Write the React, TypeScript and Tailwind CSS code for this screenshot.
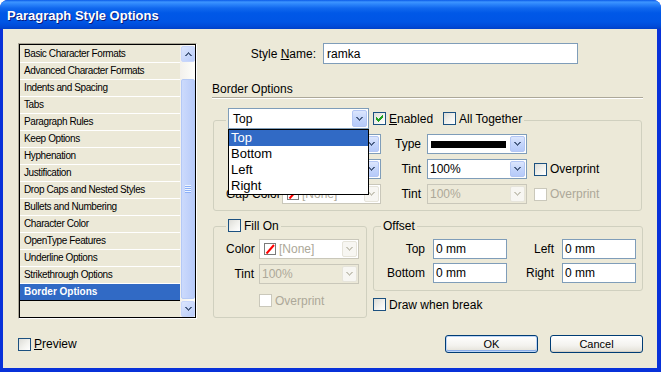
import React from "react";

const CHEV = "M0 0h2v1h-2z M5 0h2v1h-2z M1 1h2v1h-2z M4 1h2v1h-2z M2 2h3v1h-3z M3 3h1v1h-1z";
const CHEV_UP = "M3 0h1v1h-1z M2 1h3v1h-3z M1 2h2v1h-2z M4 2h2v1h-2z M0 3h2v1h-2z M5 3h2v1h-2z";
const TICK =
  "M6 0h1v1h-1z M5 1h2v1h-2z M0 2h1v1h-1z M4 2h3v1h-3z M0 3h2v1h-2z M3 3h3v1h-3z M0 4h5v1h-5z M1 5h3v1h-3z M2 6h1v1h-1z";

function Chevron({ color, up = false }: { color: string; up?: boolean }) {
  return (
    <svg width="7" height="4" viewBox="0 0 7 4" shapeRendering="crispEdges">
      <path d={up ? CHEV_UP : CHEV} fill={color} />
    </svg>
  );
}

function Box({ checked = false, disabled = false }: { checked?: boolean; disabled?: boolean }) {
  return (
    <span
      className={
        disabled
          ? "flex h-[13px] w-[13px] flex-none border border-[#CAC8BB] bg-white"
          : "flex h-[13px] w-[13px] flex-none items-start border border-[#1C5180] bg-[linear-gradient(135deg,#DCDCD7_0%,#F2F2EE_55%,#FFFFFF_100%)]"
      }
    >
      {checked ? (
        <svg className="ml-[2px] mt-[2px]" width="7" height="7" viewBox="0 0 7 7" shapeRendering="crispEdges">
          <path d={TICK} fill="#21A121" />
        </svg>
      ) : null}
    </span>
  );
}

function Arrow({ disabled = false }: { disabled?: boolean }) {
  return (
    <span
      className={
        disabled
          ? "my-[1px] mr-[1px] flex w-[15px] flex-none items-center justify-center rounded-[2px] border border-[#E6E4DA] bg-[#F7F6F2]"
          : "my-[1px] mr-[1px] flex w-[15px] flex-none items-center justify-center rounded-[2px] border border-[#B3C6F4] bg-[linear-gradient(180deg,#DCE6FD_0%,#C4D5FB_50%,#B6CAF9_100%)]"
      }
    >
      <Chevron color={disabled ? "#C9C7BA" : "#4D6185"} />
    </span>
  );
}

function NoneSwatch() {
  return (
    <svg width="12" height="12" viewBox="0 0 12 12" className="flex-none">
      <rect x="0.5" y="0.5" width="11" height="11" fill="#fff" stroke="#7A7A7A" />
      <path d="M2.5 10.5 L10 2" stroke="#FF0000" strokeWidth="2" />
    </svg>
  );
}

const listItems = [
  "Basic Character Formats",
  "Advanced Character Formats",
  "Indents and Spacing",
  "Tabs",
  "Paragraph Rules",
  "Keep Options",
  "Hyphenation",
  "Justification",
  "Drop Caps and Nested Styles",
  "Bullets and Numbering",
  "Character Color",
  "OpenType Features",
  "Underline Options",
  "Strikethrough Options",
];

export default function App() {
  return (
    <div className="flex h-[372px] w-[661px] flex-col overflow-hidden rounded-t-[8px] bg-[#0831D9] font-['Liberation_Sans',Arial,sans-serif] text-black">
      {/* Title bar */}
      <div className="flex h-[29px] flex-none items-center bg-[linear-gradient(180deg,#0A5AE8_0%,#3D95FF_7%,#2D86FB_14%,#1168EE_28%,#0058E7_45%,#0055E5_75%,#004BD9_90%,#0040C8_100%)] pl-[7px] pt-[3px] text-[13px] font-bold text-white [text-shadow:1px_1px_0_#0A1A7A]">
        Paragraph Style Options
      </div>

      {/* Body */}
      <div className="mb-[4px] ml-[3px] mr-[4px] flex min-h-0 flex-1 flex-col bg-[#ECE9D8] pl-[15px] pr-[14px] pt-[14px]">
        <div className="flex h-[276px] flex-none">
          {/* Category list */}
          <div className="flex h-[276px] w-[179px] flex-none border border-b-white border-l-[#ACA899] border-r-white border-t-[#ACA899]">
            <div className="flex flex-1 border border-black">
              <div className="flex-1 bg-[#ECE9D8] pt-[1px] text-[10px] tracking-[-0.4px]">
                {listItems.map((t) => (
                  <div key={t} className="flex h-[17px] items-center border-b border-white pl-[4px] leading-[16px]">
                    {t}
                  </div>
                ))}
                <div className="flex h-[17px] items-center border-b border-black bg-[#316AC5] pl-[4px] font-bold leading-[16px] tracking-normal text-white">
                  Border Options
                </div>
              </div>
              <div className="flex w-[15px] flex-none flex-col bg-[linear-gradient(90deg,#F3F1EC,#FEFEFB)] pl-[1px]">
                <div className="mt-[1px] flex h-[16px] flex-none items-center justify-center rounded-[2px] border border-[#C8D6FB] bg-[linear-gradient(135deg,#DCE6FD,#B9CCFA)]">
                  <Chevron color="#4D6185" up />
                </div>
                <div className="h-[17px] flex-none" />
                <div className="flex h-[220px] flex-none flex-col items-center justify-center rounded-[2px] border border-[#B4C9F6] bg-[linear-gradient(90deg,#CCDAFC,#B8CBF9)]">
                  <div className="h-px w-[6px] bg-[#EEF4FE]" />
                  <div className="h-px w-[6px] bg-[#8CB0F8]" />
                  <div className="h-px w-[6px] bg-[#EEF4FE]" />
                  <div className="h-px w-[6px] bg-[#8CB0F8]" />
                  <div className="h-px w-[6px] bg-[#EEF4FE]" />
                  <div className="h-px w-[6px] bg-[#8CB0F8]" />
                  <div className="h-px w-[6px] bg-[#EEF4FE]" />
                  <div className="h-px w-[6px] bg-[#8CB0F8]" />
                </div>
                <div className="h-[2px] flex-none" />
                <div className="flex h-[16px] flex-none items-center justify-center rounded-[2px] border border-[#C8D6FB] bg-[linear-gradient(135deg,#DCE6FD,#B9CCFA)]">
                  <Chevron color="#4D6185" />
                </div>
              </div>
            </div>
          </div>

          {/* Right panel */}
          <div className="ml-[15px] flex w-[431px] flex-none flex-col text-[12px] leading-[14px]">
            <div className="flex h-[21px] items-center">
              <span className="w-[104px] text-right">
                Style <span className="underline">N</span>ame:
              </span>
              <div className="ml-[7px] flex h-[21px] w-[255px] items-center border border-[#7F9DB9] bg-white pl-[3px]">
                ramka
              </div>
            </div>

            <div className="mt-[18px] h-[15px]">Border Options</div>
            <div className="h-px bg-[#ACA899]" />
            <div className="h-px bg-white" />

            {/* Border group */}
            <fieldset className="ml-[1px] mt-[9px] w-[429px] rounded-[3px] border border-[#D0D0BF] pb-[6px] pl-[12px] pt-[1px]">
              <legend className="h-[25px] px-[2px]">
                <div className="flex h-[21px] items-center">
                  <div className="relative">
                    <div className="flex h-[21px] w-[141px] border border-[#7F9DB9] bg-white">
                      <span className="flex flex-1 items-center pl-[4px]">Top</span>
                      <Arrow />
                    </div>
                    <div className="absolute left-0 top-[21px] z-10 w-[141px] border border-black bg-white text-[13px] leading-[16px]">
                      <div className="h-[16px] bg-[#316AC5] pl-[2px] text-white">Top</div>
                      <div className="h-[16px] pl-[2px]">Bottom</div>
                      <div className="h-[16px] pl-[2px]">Left</div>
                      <div className="h-[16px] pl-[2px]">Right</div>
                    </div>
                  </div>
                  <div className="ml-[4px] flex items-center">
                    <Box checked />
                    <span className="ml-[3px] w-[54px]">
                      <span className="underline">E</span>nabled
                    </span>
                  </div>
                  <div className="flex items-center">
                    <Box />
                    <span className="ml-[3px]">All Together</span>
                  </div>
                </div>
              </legend>

              <div className="flex h-[20px] items-center">
                <span className="w-[53px]" />
                <div className="ml-[3px] flex h-[20px] w-[99px] border border-[#7F9DB9] bg-white">
                  <span className="flex-1" />
                  <Arrow />
                </div>
                <span className="w-[40px] text-right">Type</span>
                <div className="ml-[6px] flex h-[20px] w-[100px] border border-[#7F9DB9] bg-white">
                  <span className="flex flex-1 items-center pl-[3px]">
                    <span className="h-[7px] w-[75px] bg-black" />
                  </span>
                  <Arrow />
                </div>
              </div>

              <div className="mt-[5px] flex h-[20px] items-center">
                <span className="w-[53px]" />
                <div className="ml-[3px] flex h-[20px] w-[99px] border border-[#7F9DB9] bg-white">
                  <span className="flex-1" />
                  <Arrow />
                </div>
                <span className="w-[40px] text-right">Tint</span>
                <div className="ml-[6px] flex h-[20px] w-[100px] border border-[#7F9DB9] bg-white">
                  <span className="flex flex-1 items-center pl-[2px]">100%</span>
                  <Arrow />
                </div>
                <div className="ml-[7px] flex items-center">
                  <Box />
                  <span className="ml-[3px]">Overprint</span>
                </div>
              </div>

              <div className="mt-[5px] flex h-[20px] items-center">
                <span className="w-[53px] whitespace-nowrap text-right">Gap Color</span>
                <div className="ml-[3px] flex h-[20px] w-[99px] border border-[#C9C7BA] bg-white">
                  <span className="flex flex-1 items-center pl-[4px] text-[#ACA899]">
                    <NoneSwatch />
                    <span className="ml-[3px]">[None]</span>
                  </span>
                  <Arrow disabled />
                </div>
                <span className="w-[40px] text-right">Tint</span>
                <div className="ml-[6px] flex h-[20px] w-[100px] border border-[#C9C7BA] bg-[#ECE9D8]">
                  <span className="flex flex-1 items-center pl-[2px] text-[#ACA899]">100%</span>
                  <Arrow disabled />
                </div>
                <div className="ml-[7px] flex items-center">
                  <Box disabled />
                  <span className="ml-[3px] text-[#ACA899]">Overprint</span>
                </div>
              </div>
            </fieldset>

            {/* Lower section */}
            <div className="mt-[8px] flex items-start">
              <fieldset className="ml-[1px] w-[154px] flex-none rounded-[3px] border border-[#D0D0BF] pb-[10px] pl-[12px] pt-[5px]">
                <legend className="h-[15px] px-[2px]">
                  <div className="flex h-[15px] items-start">
                    <Box />
                    <span className="ml-[3px] leading-[15px]">Fill On</span>
                  </div>
                </legend>
                <div className="flex h-[20px] items-center">
                  <span className="w-[28px] text-right">Color</span>
                  <div className="ml-[5px] flex h-[20px] w-[100px] border border-[#C9C7BA] bg-white">
                    <span className="flex flex-1 items-center pl-[4px] text-[#ACA899]">
                      <NoneSwatch />
                      <span className="ml-[3px]">[None]</span>
                    </span>
                    <Arrow disabled />
                  </div>
                </div>
                <div className="mt-[5px] flex h-[20px] items-center">
                  <span className="w-[28px] text-right">Tint</span>
                  <div className="ml-[5px] flex h-[20px] w-[100px] border border-[#C9C7BA] bg-[#ECE9D8]">
                    <span className="flex flex-1 items-center pl-[2px] text-[#ACA899]">100%</span>
                    <Arrow disabled />
                  </div>
                </div>
                <div className="ml-[33px] mt-[10px] flex h-[13px] items-center">
                  <Box disabled />
                  <span className="ml-[3px] text-[#ACA899]">Overprint</span>
                </div>
              </fieldset>

              <div className="ml-[6px] flex flex-col">
                <fieldset className="w-[270px] rounded-[3px] border border-[#D0D0BF] pb-[7px] pl-[7px] pt-[5px]">
                  <legend className="h-[15px] px-[2px] leading-[15px]">Offset</legend>
                  <div className="flex h-[20px] items-center">
                    <span className="w-[44px] text-right">Top</span>
                    <div className="ml-[8px] flex h-[20px] w-[74px] items-center border border-[#7F9DB9] bg-white pl-[2px]">
                      0 mm
                    </div>
                    <span className="w-[47px] text-right">Left</span>
                    <div className="ml-[8px] flex h-[20px] w-[74px] items-center border border-[#7F9DB9] bg-white pl-[2px]">
                      0 mm
                    </div>
                  </div>
                  <div className="mt-[4px] flex h-[20px] items-center">
                    <span className="w-[44px] text-right">Bottom</span>
                    <div className="ml-[8px] flex h-[20px] w-[74px] items-center border border-[#7F9DB9] bg-white pl-[2px]">
                      0 mm
                    </div>
                    <span className="w-[47px] text-right">Right</span>
                    <div className="ml-[8px] flex h-[20px] w-[74px] items-center border border-[#7F9DB9] bg-white pl-[2px]">
                      0 mm
                    </div>
                  </div>
                </fieldset>
                <div className="mt-[7px] flex h-[13px] items-center">
                  <Box />
                  <span className="ml-[3px]">Draw when break</span>
                </div>
              </div>
            </div>
          </div>
        </div>

        {/* Bottom row */}
        <div className="mt-[16px] flex h-[18px] flex-none items-center text-[12px]">
          <Box />
          <span className="ml-[3px]">
            <span className="underline">P</span>review
          </span>
          <div className="ml-auto flex gap-[12px] text-[11px]">
            <div className="flex h-[18px] w-[93px] items-center justify-center rounded-[3px] border border-[#003C74] bg-[linear-gradient(180deg,#FFFFFF_0%,#F3F2EE_60%,#E3E0D6_100%)] shadow-[inset_0_0_0_1px_#BCD4F6,inset_0_-1px_0_1px_#8AADE8]">
              OK
            </div>
            <div className="flex h-[18px] w-[93px] items-center justify-center rounded-[3px] border border-[#003C74] bg-[linear-gradient(180deg,#FFFFFF_0%,#F3F2EE_60%,#E3E0D6_100%)] shadow-[inset_0_-1px_0_#D6D0C5]">
              Cancel
            </div>
          </div>
        </div>
      </div>
    </div>
  );
}
